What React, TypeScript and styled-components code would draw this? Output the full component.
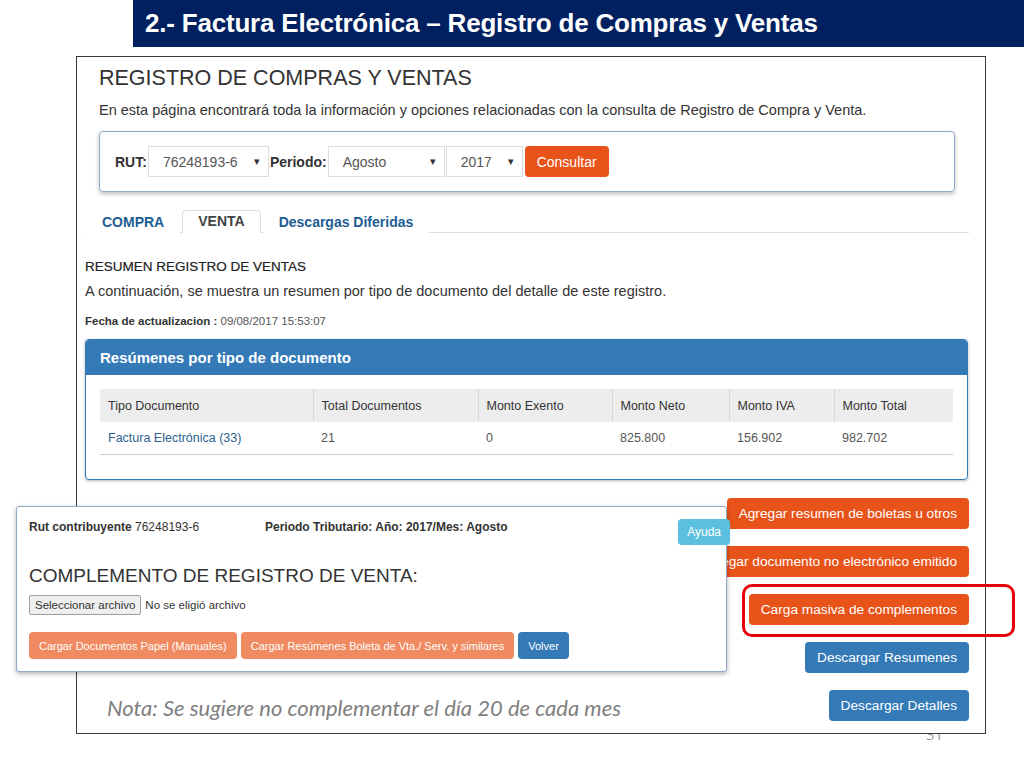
import React from 'react';
import styled, { createGlobalStyle } from 'styled-components';

const GlobalStyle = createGlobalStyle`
  html, body {
    margin: 0;
    padding: 0;
    background: #fff;
  }
  body {
    font-family: "Liberation Sans", Arial, sans-serif;
    color: #333;
  }
  * { box-sizing: border-box; }
`;

const Slide = styled.div`
  position: relative;
  width: 1024px;
  height: 768px;
  overflow: hidden;
  background: #fff;
`;

const TitleBar = styled.div`
  margin-left: 133px;
  height: 47px;
  background: #002060;
  color: #fff;
  display: flex;
  align-items: center;
  padding-left: 12px;
  font-family: "Liberation Sans Narrow", "Liberation Sans", Arial, sans-serif;
  font-weight: bold;
  font-size: 26px;
  letter-spacing: -0.2px;
`;

const Frame = styled.div`
  position: relative;
  z-index: 1;
  margin: 9px 0 0 76px;
  width: 910px;
  height: 678px;
  border: 1px solid #3a3a3a;
  background: #fff;
  padding: 8px 16px 0 8px;
`;

const Header = styled.div`
  padding: 0 14px 0 14px;
`;

const PageTitle = styled.h1`
  margin: 0;
  font-size: 21.5px;
  line-height: 26px;
  font-weight: normal;
  color: #333;
`;

const Lead = styled.p`
  margin: 9px 0 0;
  font-size: 14.5px;
  line-height: 20px;
  color: #333;
`;

const FilterBox = styled.div`
  margin-top: 11px;
  width: 856px;
  height: 61px;
  border: 1px solid #8eaacb;
  border-radius: 4px;
  box-shadow: 0 2px 4px rgba(0, 0, 0, 0.25);
  display: flex;
  align-items: center;
  padding: 0 15px;
`;

const Label = styled.span`
  font-weight: bold;
  font-size: 14px;
  color: #333;
  margin-right: 1px;
`;

const Select = styled.div<{ w: number }>`
  width: ${(p) => p.w}px;
  height: 31px;
  border: 1px solid #ddd;
  background: #fff;
  display: flex;
  align-items: center;
  justify-content: space-between;
  padding: 0 8px 0 14px;
  font-size: 14px;
  color: #555;
  margin-right: 1px;
  &::after {
    content: '▾';
    font-size: 11px;
    color: #333;
  }
`;

const Button = styled.button<{ tone: 'orange' | 'blue' | 'light' | 'info'; h?: number; fs?: number; px?: number }>`
  height: ${(p) => p.h ?? 31}px;
  border: none;
  border-radius: 4px;
  padding: 0 ${(p) => p.px ?? 12}px;
  font-family: "Liberation Sans", Arial, sans-serif;
  font-size: ${(p) => p.fs ?? 14}px;
  color: #fff;
  white-space: nowrap;
  background: ${(p) =>
    p.tone === 'orange'
      ? '#e8531a'
      : p.tone === 'blue'
      ? '#337ab7'
      : p.tone === 'info'
      ? '#5bc0de'
      : '#f08a60'};
`;

const Tabs = styled.div`
  margin-top: 17px;
  display: flex;
  align-items: flex-end;
  border-bottom: 1px solid #ddd;
  height: 24px;
  padding-left: 1px;
`;

const Tab = styled.div<{ active?: boolean }>`
  height: ${(p) => (p.active ? 23 : 22)}px;
  padding: 0 15px;
  margin-right: 2px;
  display: flex;
  align-items: flex-start;
  padding-top: 2px;
  font-size: 14px;
  font-weight: bold;
  color: ${(p) => (p.active ? '#444' : '#1d5d94')};
  border: 1px solid ${(p) => (p.active ? '#ddd' : 'transparent')};
  border-bottom-color: ${(p) => (p.active ? '#fff' : 'transparent')};
  border-radius: 4px 4px 0 0;
  background: #fff;
  margin-bottom: -1px;
`;

const SectionTitle = styled.h4`
  margin: 25px 0 0;
  font-size: 13.5px;
  line-height: 18px;
  font-weight: normal;
  color: #222;
  -webkit-text-stroke: 0.2px #222;
`;

const SectionText = styled.p`
  margin: 5px 0 0;
  font-size: 14.5px;
  line-height: 20px;
`;

const Updated = styled.div`
  margin-top: 12px;
  font-size: 11.5px;
  line-height: 16px;
  color: #555;
  b { color: #333; }
`;

const Panel = styled.div`
  margin-top: 10px;
  width: 883px;
  height: 141px;
  border: 1px solid #337ab7;
  border-radius: 4px;
  box-shadow: 0 1px 3px rgba(0, 0, 0, 0.3);
  overflow: hidden;
`;

const PanelHeading = styled.div`
  height: 35px;
  background: #337ab7;
  color: #fff;
  font-weight: bold;
  font-size: 15px;
  display: flex;
  align-items: center;
  padding-left: 14px;
`;

const PanelBody = styled.div`
  padding: 14px 14px 0 14px;
`;

const Table = styled.table`
  width: 853px;
  border-collapse: collapse;
  font-size: 12.5px;
  th {
    background: #ededed;
    font-weight: normal;
    color: #333;
    text-align: left;
    height: 33px;
    padding: 0 8px;
    border-right: 1px solid #d8d8d8;
  }
  th:last-child { border-right: none; }
  td {
    height: 32px;
    padding: 0 8px;
    color: #555;
    border-bottom: 1px solid #ccc;
  }
`;

const DocLink = styled.span`
  color: #2d5f8f;
`;

const BottomRow = styled.div`
  margin-top: 18px;
  display: flex;
  justify-content: space-between;
  align-items: flex-end;
`;

const Note = styled.div`
  margin: 0 0 0 22px;
  font-family: Lato, "Open Sans", sans-serif;
  font-style: italic;
  font-size: 22px;
  color: #7f7f7f;
`;

const ButtonColumn = styled.div`
  display: flex;
  flex-direction: column;
  align-items: flex-end;
  gap: 17px;
`;

const PageNumber = styled.div`
  position: absolute;
  left: 926px;
  top: 724px;
  z-index: 0;
  font-family: "Open Sans", sans-serif;
  font-size: 15px;
  color: #9a9a9a;
`;

const Highlight = styled.div`
  position: absolute;
  z-index: 3;
  left: 742px;
  top: 584px;
  width: 273px;
  height: 53px;
  border: 3px solid #e8000d;
  border-radius: 10px;
`;

const Popup = styled.div`
  position: absolute;
  z-index: 2;
  left: 16px;
  top: 506px;
  width: 711px;
  height: 166px;
  background: #fff;
  border: 1px solid #8fa9c9;
  border-radius: 3px;
  box-shadow: 0 2px 5px rgba(0, 0, 0, 0.3);
  padding: 12px 0 0 12px;
`;

const InfoRow = styled.div`
  display: flex;
  align-items: flex-start;
  font-size: 12px;
  color: #333;
  height: 30px;
`;

const InfoItem = styled.div<{ w?: number }>`
  width: ${(p) => (p.w ? `${p.w}px` : 'auto')};
  line-height: 16px;
  span { font-weight: normal; }
  b { font-weight: bold; }
`;

const HelpButton = styled(Button)`
  margin-left: auto;
  margin-right: -4px;
  margin-top: 0;
`;

const PopupTitle = styled.h2`
  margin: 16px 0 0;
  font-size: 19px;
  line-height: 22px;
  font-weight: normal;
  color: #333;
`;

const FileRow = styled.div`
  margin-top: 8px;
  display: flex;
  align-items: center;
  font-size: 11.5px;
  color: #333;
`;

const FileButton = styled.div`
  height: 20px;
  padding: 0 5px;
  display: flex;
  align-items: center;
  background: #efefef;
  border: 1px solid #9e9e9e;
  border-radius: 2px;
  margin-right: 4px;
`;

const ActionRow = styled.div`
  margin-top: 17px;
  display: flex;
  gap: 4px;
`;

export default function App() {
  return (
    <Slide>
      <GlobalStyle />
      <TitleBar>2.- Factura Electrónica – Registro de Compras y Ventas</TitleBar>
      <Frame>
        <Header>
          <PageTitle>REGISTRO DE COMPRAS Y VENTAS</PageTitle>
          <Lead>
            En esta página encontrará toda la información y opciones relacionadas con la consulta de Registro de
            Compra y Venta.
          </Lead>
          <FilterBox>
            <Label>RUT:</Label>
            <Select w={121}>76248193-6</Select>
            <Label>Periodo:</Label>
            <Select w={117}>Agosto</Select>
            <Select w={77}>2017</Select>
            <Button tone="orange" style={{ marginLeft: 1 }}>
              Consultar
            </Button>
          </FilterBox>
        </Header>
        <Tabs>
          <Tab>COMPRA</Tab>
          <Tab active>VENTA</Tab>
          <Tab>Descargas Diferidas</Tab>
        </Tabs>
        <SectionTitle>RESUMEN REGISTRO DE VENTAS</SectionTitle>
        <SectionText>A continuación, se muestra un resumen por tipo de documento del detalle de este registro.</SectionText>
        <Updated>
          <b>Fecha de actualizacion :</b> 09/08/2017 15:53:07
        </Updated>
        <Panel>
          <PanelHeading>Resúmenes por tipo de documento</PanelHeading>
          <PanelBody>
            <Table>
              <thead>
                <tr>
                  <th style={{ width: 213 }}>Tipo Documento</th>
                  <th style={{ width: 165 }}>Total Documentos</th>
                  <th style={{ width: 134 }}>Monto Exento</th>
                  <th style={{ width: 117 }}>Monto Neto</th>
                  <th style={{ width: 105 }}>Monto IVA</th>
                  <th>Monto Total</th>
                </tr>
              </thead>
              <tbody>
                <tr>
                  <td>
                    <DocLink>Factura Electrónica (33)</DocLink>
                  </td>
                  <td>21</td>
                  <td>0</td>
                  <td>825.800</td>
                  <td>156.902</td>
                  <td>982.702</td>
                </tr>
              </tbody>
            </Table>
          </PanelBody>
        </Panel>
        <BottomRow>
          <Note>Nota: Se sugiere no complementar el día 20 de cada mes</Note>
          <ButtonColumn>
            <Button tone="orange" fs={13.7}>Agregar resumen de boletas u otros</Button>
            <Button tone="orange" fs={13.7}>Agregar documento no electrónico emitido</Button>
            <Button tone="orange" fs={13.7}>Carga masiva de complementos</Button>
            <Button tone="blue" fs={13.7}>Descargar Resumenes</Button>
            <Button tone="blue" fs={13.7}>Descargar Detalles</Button>
          </ButtonColumn>
        </BottomRow>
      </Frame>
      <PageNumber>31</PageNumber>
      <Popup>
        <InfoRow>
          <InfoItem w={236}>
            <b>Rut contribuyente</b> <span>76248193-6</span>
          </InfoItem>
          <InfoItem>
            <b>Periodo Tributario: Año: 2017/Mes: Agosto</b>
          </InfoItem>
          <HelpButton tone="info" h={26} fs={12} px={9}>
            Ayuda
          </HelpButton>
        </InfoRow>
        <PopupTitle>COMPLEMENTO DE REGISTRO DE VENTA:</PopupTitle>
        <FileRow>
          <FileButton>Seleccionar archivo</FileButton>
          No se eligió archivo
        </FileRow>
        <ActionRow>
          <Button tone="light" h={27} fs={11} px={10}>
            Cargar Documentos Papel (Manuales)
          </Button>
          <Button tone="light" h={27} fs={11} px={10}>
            Cargar Resúmenes Boleta de Vta./ Serv. y similares
          </Button>
          <Button tone="blue" h={27} fs={11} px={10}>
            Volver
          </Button>
        </ActionRow>
      </Popup>
      <Highlight />
    </Slide>
  );
}
